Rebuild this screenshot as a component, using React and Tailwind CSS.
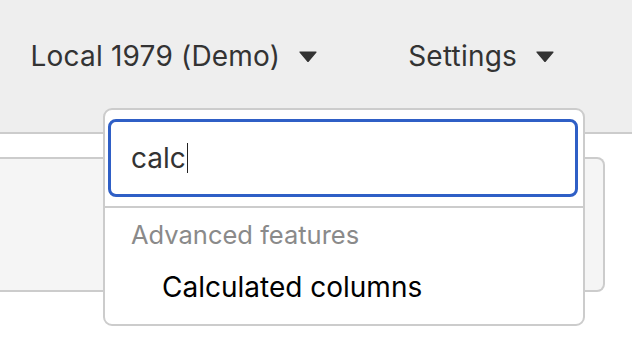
import React from "react";

function Caret() {
  return (
    <svg width="18" height="11" viewBox="0 0 18 11" className="block">
      <path d="M1 1 H17 L9 10.5 Z" fill="#333" stroke="#333" strokeWidth="1.2" strokeLinejoin="round" />
    </svg>
  );
}

export default function App() {
  return (
    <div className="relative w-[632px] h-[348px] overflow-hidden bg-white font-['Inter',sans-serif] text-[#333]">
      <div className="h-[134px] bg-[#eeeeee] border-b-2 border-[#cccccc] flex items-start justify-end pt-[40px] pr-[78px]">
        <div className="flex items-center gap-[19px] h-[32px]">
          <span className="text-[28px] leading-[32px] tracking-[0.2px]">Local 1979 (Demo)</span>
          <Caret />
        </div>
        <div className="flex items-center gap-[19px] h-[32px] ml-[91px]">
          <span className="text-[28px] leading-[32px] tracking-[0.2px]">Settings</span>
          <Caret />
        </div>
      </div>
      <div className="mt-[23px] w-[605px] h-[135px] bg-[#f5f5f5] border-2 border-l-0 border-[#cccccc] rounded-r-[8px]" />

      <div className="absolute left-[103px] top-[108px] w-[482px] h-[218px] bg-white border-2 border-[#cccccc] rounded-[9px] flex flex-col">
        <div className="pt-[9px] pl-[3px] pr-[5px]">
          <div className="h-[78px] border-[3px] border-[#2f5fc6] rounded-[8px] flex items-center pl-[20px]">
            <span className="text-[28px] leading-[32px] text-[#333]">calc</span>
            <span className="w-[1.5px] h-[30px] bg-[#222] ml-[1px]" />
          </div>
        </div>
        <div className="mt-[9px] border-t-2 border-[#cccccc]" />
        <div className="pl-[26px] pt-[11px] text-[25.5px] leading-[32px] text-[#8a8a8a]">Advanced features</div>
        <div className="pl-[57px] pt-[20px] text-[28px] leading-[32px] text-black">Calculated columns</div>
      </div>
    </div>
  );
}
